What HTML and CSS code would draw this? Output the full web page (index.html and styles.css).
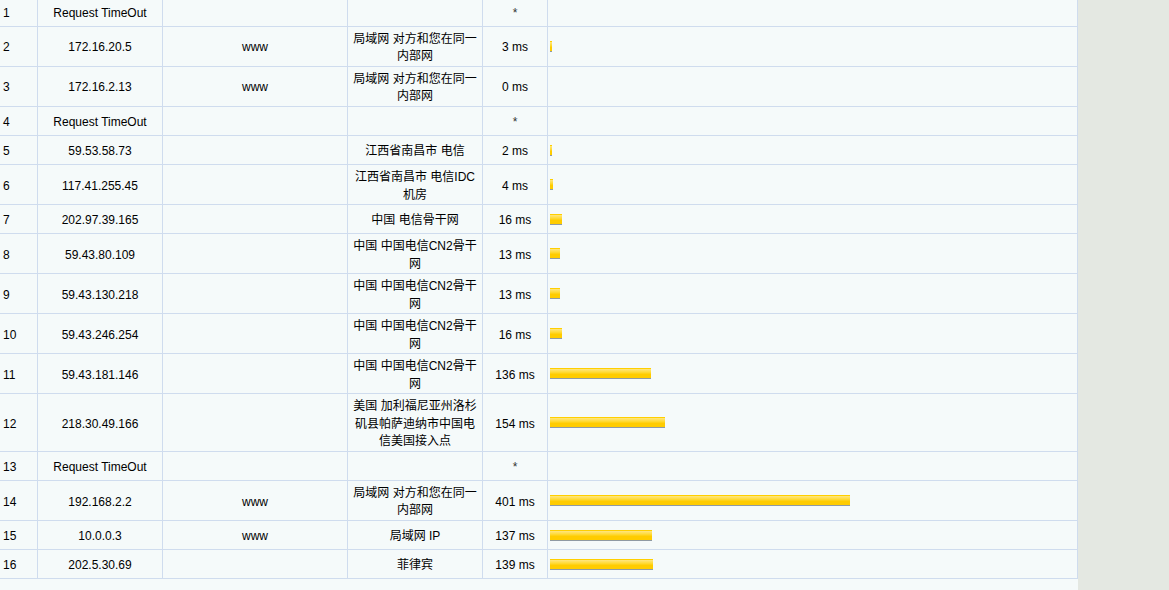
FILE: index.html
```html
<!DOCTYPE html>
<html>
<head>
<meta charset="utf-8">
<meta name="viewport" content="width=device-width, initial-scale=1">
<link rel="stylesheet" href="styles.css">
</head>
<body>

<div class="wrap">
<table class="trace">
  <colgroup>
    <col class="c-hop">
    <col class="c-ip">
    <col class="c-host">
    <col class="c-loc">
    <col class="c-time">
    <col>
  </colgroup>
  <tr><td class="hop">1</td><td>Request TimeOut</td><td></td><td></td><td class="star">*</td><td class="graph"></td></tr>
  <tr><td class="hop">2</td><td>172.16.20.5</td><td>www</td><td>局域网 对方和您在同一内部网</td><td>3 ms</td><td class="graph"><span class="bar" style="width:2px"></span></td></tr>
  <tr><td class="hop">3</td><td>172.16.2.13</td><td>www</td><td>局域网 对方和您在同一内部网</td><td>0 ms</td><td class="graph"></td></tr>
  <tr><td class="hop">4</td><td>Request TimeOut</td><td></td><td></td><td class="star">*</td><td class="graph"></td></tr>
  <tr><td class="hop">5</td><td>59.53.58.73</td><td></td><td>江西省南昌市 电信</td><td>2 ms</td><td class="graph"><span class="bar" style="width:1.5px"></span></td></tr>
  <tr><td class="hop">6</td><td>117.41.255.45</td><td></td><td>江西省南昌市 电信IDC机房</td><td>4 ms</td><td class="graph"><span class="bar" style="width:3px"></span></td></tr>
  <tr><td class="hop">7</td><td>202.97.39.165</td><td></td><td>中国 电信骨干网</td><td>16 ms</td><td class="graph"><span class="bar" style="width:12px"></span></td></tr>
  <tr><td class="hop">8</td><td>59.43.80.109</td><td></td><td>中国 中国电信CN2骨干网</td><td>13 ms</td><td class="graph"><span class="bar" style="width:10px"></span></td></tr>
  <tr><td class="hop">9</td><td>59.43.130.218</td><td></td><td>中国 中国电信CN2骨干网</td><td>13 ms</td><td class="graph"><span class="bar" style="width:10px"></span></td></tr>
  <tr><td class="hop">10</td><td>59.43.246.254</td><td></td><td>中国 中国电信CN2骨干网</td><td>16 ms</td><td class="graph"><span class="bar" style="width:12px"></span></td></tr>
  <tr><td class="hop">11</td><td>59.43.181.146</td><td></td><td>中国 中国电信CN2骨干网</td><td>136 ms</td><td class="graph"><span class="bar" style="width:101px"></span></td></tr>
  <tr><td class="hop">12</td><td>218.30.49.166</td><td></td><td>美国 加利福尼亚州洛杉矶县帕萨迪纳市中国电信美国接入点</td><td>154 ms</td><td class="graph"><span class="bar" style="width:115px"></span></td></tr>
  <tr><td class="hop">13</td><td>Request TimeOut</td><td></td><td></td><td class="star">*</td><td class="graph"></td></tr>
  <tr><td class="hop">14</td><td>192.168.2.2</td><td>www</td><td>局域网 对方和您在同一内部网</td><td>401 ms</td><td class="graph"><span class="bar" style="width:300px"></span></td></tr>
  <tr><td class="hop">15</td><td>10.0.0.3</td><td>www</td><td>局域网 IP</td><td>137 ms</td><td class="graph"><span class="bar" style="width:102px"></span></td></tr>
  <tr><td class="hop">16</td><td>202.5.30.69</td><td></td><td>菲律宾</td><td>139 ms</td><td class="graph"><span class="bar" style="width:103px"></span></td></tr>
</table>
<div class="foot">traceroute finished at hop 16</div>
</div>

</body>
</html>
```

FILE: styles.css
```css
html, body {
  margin: 0;
  padding: 0;
  background-color: #e4e8e2;
  font-family: "Liberation Sans", "Noto Sans CJK SC", sans-serif;
  font-size: 12px;
  color: #000;
}

.wrap {
  width: 1078px;
  background-color: #f5fafa;
  margin-top: -2.5px;
  min-height: 600px;
}

/* the trace table */
.trace {
  width: 1078px;
  table-layout: fixed;
  border-collapse: separate;
  border-spacing: 0;
}

.c-hop { width: 38px; }
.c-ip { width: 125px; }
.c-host { width: 185px; }
.c-loc { width: 135px; }
.c-time { width: 65px; }

.trace tr {
  height: 29.2px;
}

.trace td {
  border-right: 1px solid #cfdcee;
  border-bottom: 1px solid #cfdcee;
  padding: 4px 4px 0;
  line-height: 17.5px;
  text-align: center;
  vertical-align: middle;
}

.trace td.hop {
  text-align: left;
  padding-left: 3px;
}

.trace td.star {
  color: #333;
}

.trace td.graph {
  text-align: left;
  padding: 2px 2px 2px;
}

/* latency bar */
.bar {
  display: inline-block;
  height: 9px;
  vertical-align: middle;
  border-top: 1px solid #ffcf00;
  border-bottom: 1px solid #8f9aa3;
  background: linear-gradient(#ffe680 0%, #ffdb3a 35%, #ffcc00 60%, #ffcc00 100%);
}

.foot {
  text-align: center;
  padding-top: 8px;
  line-height: 18px;
  color: #333;
}
```
